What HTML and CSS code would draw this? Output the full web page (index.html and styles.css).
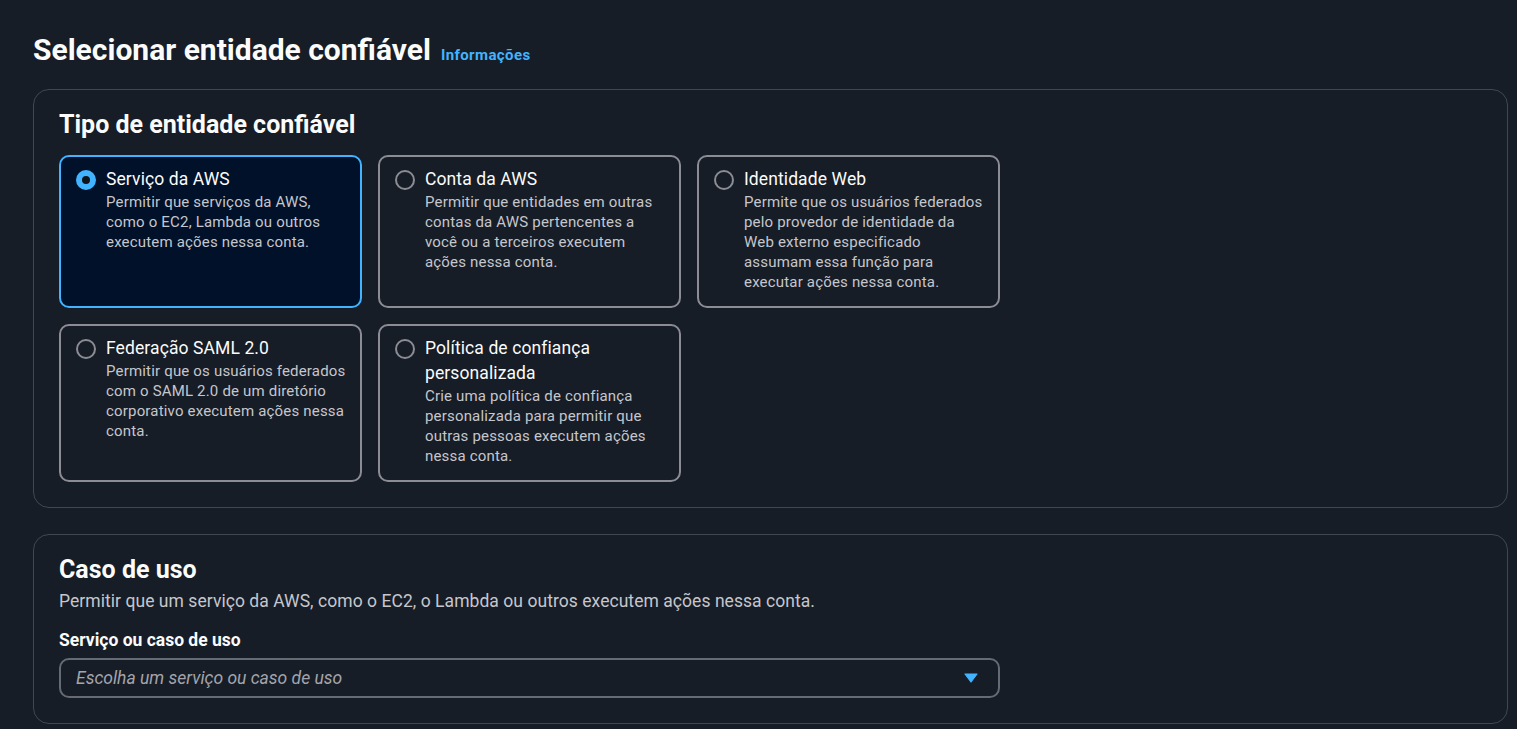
FILE: index.html
```html
<!DOCTYPE html>
<html lang="pt-BR">
<head>
<meta charset="utf-8">
<title>Selecionar entidade confiável</title>
<link rel="stylesheet" href="styles.css">
</head>
<body>
<main class="page">
  <header class="page-header">
    <h1 class="page-title">Selecionar entidade confiável</h1>
    <a class="info-link" href="#">Informações</a>
  </header>

  <section class="container">
    <h2 class="container-title">Tipo de entidade confiável</h2>
    <div class="tiles">
      <label class="tile tile-selected">
        <span class="radio radio-checked"></span>
        <span class="tile-body">
          <span class="tile-title">Serviço da AWS</span>
          <span class="tile-desc">Permitir que serviços da AWS, como o EC2, Lambda ou outros executem ações nessa conta.</span>
        </span>
      </label>
      <label class="tile">
        <span class="radio"></span>
        <span class="tile-body">
          <span class="tile-title">Conta da AWS</span>
          <span class="tile-desc">Permitir que entidades em outras contas da AWS pertencentes a você ou a terceiros executem ações nessa conta.</span>
        </span>
      </label>
      <label class="tile">
        <span class="radio"></span>
        <span class="tile-body">
          <span class="tile-title">Identidade Web</span>
          <span class="tile-desc">Permite que os usuários federados pelo provedor de identidade da Web externo especificado assumam essa função para executar ações nessa conta.</span>
        </span>
      </label>
      <label class="tile">
        <span class="radio"></span>
        <span class="tile-body">
          <span class="tile-title">Federação SAML 2.0</span>
          <span class="tile-desc">Permitir que os usuários federados com o SAML 2.0 de um diretório corporativo executem ações nessa conta.</span>
        </span>
      </label>
      <label class="tile">
        <span class="radio"></span>
        <span class="tile-body">
          <span class="tile-title">Política de confiança personalizada</span>
          <span class="tile-desc">Crie uma política de confiança personalizada para permitir que outras pessoas executem ações nessa conta.</span>
        </span>
      </label>
    </div>
  </section>

  <section class="container container-second">
    <h2 class="container-title">Caso de uso</h2>
    <p class="container-desc">Permitir que um serviço da AWS, como o EC2, o Lambda ou outros executem ações nessa conta.</p>
    <div class="field">
      <div class="field-label">Serviço ou caso de uso</div>
      <div class="select">
        <span class="select-placeholder">Escolha um serviço ou caso de uso</span>
        <svg class="select-caret" width="14" height="10" viewBox="0 0 14 10"><path d="M1 1h12L7 9z" fill="#42b4ff" stroke="#42b4ff" stroke-width="1.2" stroke-linejoin="round"/></svg>
      </div>
    </div>
  </section>
</main>
</body>
</html>
```

FILE: styles.css
```css
* { box-sizing: border-box; }

html, body {
  margin: 0;
  background: #161d26;
}

body {
  font-family: Roboto, "Open Sans", sans-serif;
  color: #fbfbfb;
}

.page {
  padding: 31px 9px 0 33px;
}

.page-header {
  display: flex;
  align-items: baseline;
  gap: 10px;
  margin-bottom: 20px;
}

.page-title {
  margin: 0;
  font-size: 30px;
  line-height: 37.5px;
  font-weight: 700;
}

.info-link {
  color: #42b4ff;
  font-size: 15px;
  font-weight: 700;
  letter-spacing: 0.4px;
  text-decoration: none;
}

.container {
  border: 1px solid #424650;
  border-radius: 16px;
  padding: 20px 25px 25px 25px;
}

.container-second {
  margin-top: 26px;
  padding: 20px 25px 25px 25px;
}

.container-title {
  margin: 0 0 15px 0;
  font-size: 25px;
  line-height: 30px;
  font-weight: 700;
}

.container-second .container-title {
  margin-bottom: 4px;
}

.container-desc {
  margin: 0;
  font-size: 17.5px;
  line-height: 25px;
  color: #c6c6cd;
  letter-spacing: 0.05px;
}

.tiles {
  display: grid;
  grid-template-columns: repeat(3, 303px);
  gap: 16px;
}

.tile {
  display: flex;
  gap: 10px;
  border: 2px solid #8c8c94;
  border-radius: 10px;
  padding: 10px 12px 14px 15px;
  cursor: pointer;
}

.tile-selected {
  border-color: #42b4ff;
  background: #001129;
}

.radio {
  flex: none;
  width: 20px;
  height: 20px;
  margin-top: 3px;
  border-radius: 50%;
  border: 2px solid #8c8c94;
}

.radio-checked {
  border: 6px solid #42b4ff;
  background: #0f141a;
}

.tile-body {
  display: flex;
  flex-direction: column;
}

.tile-title {
  font-size: 17.5px;
  line-height: 25px;
  color: #fbfbfb;
  letter-spacing: 0.1px;
}

.tile-desc {
  font-size: 15px;
  line-height: 20px;
  color: #c6c6cd;
  letter-spacing: 0.18px;
}

.field {
  margin-top: 14px;
}

.field-label {
  font-size: 17.5px;
  line-height: 25px;
  font-weight: 700;
  margin-bottom: 5px;
}

.select {
  width: 941px;
  height: 40px;
  border: 2px solid #666a72;
  border-radius: 10px;
  display: flex;
  align-items: center;
  justify-content: space-between;
  padding: 0 20px 0 15px;
}

.select-placeholder {
  font-size: 17.5px;
  font-style: italic;
  color: #a4a4ad;
}

.select-caret {
  display: block;
}
```
